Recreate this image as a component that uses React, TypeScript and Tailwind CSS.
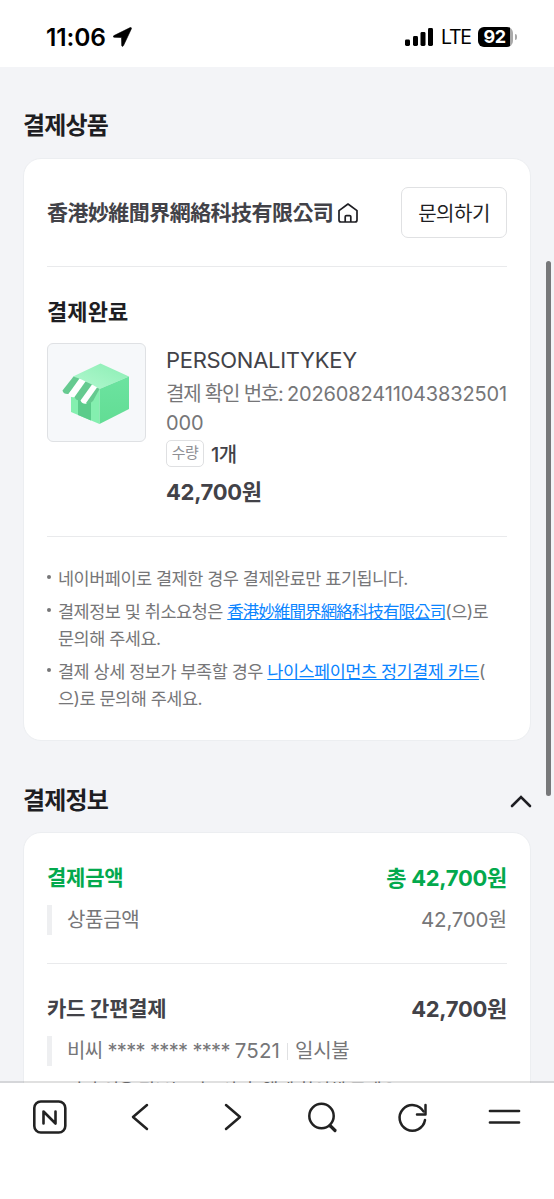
import type { ReactNode } from 'react';

const company = '香港妙維聞界網絡科技有限公司';

function StatusBar() {
  return (
    <header className="flex h-[67px] shrink-0 items-center justify-between bg-white pt-[7px] pr-[37px] pl-[46px] text-black">
      <div className="flex items-center gap-[7px]">
        <span className="w-[60px] pt-px text-[24.5px] font-semibold tracking-[-0.1px]">11:06</span>
        <svg width="19" height="20" viewBox="0 0 19 20">
          <path d="M17.2 .6 1 8.6c-1.2.6-.9 1.7.2 1.7l7.3.2.2 7.7c0 1.4 1.3 1.6 1.8.4L18.3 1.9c.5-1-.2-1.7-1.1-1.3Z" fill="#000" stroke="#000" strokeWidth="0.6" />
        </svg>
      </div>
      <div className="flex items-center">
        <svg width="29" height="18" viewBox="0 0 29 18" fill="#000">
          <rect x="0" y="11.5" width="5" height="6.5" rx="1.4" />
          <rect x="8" y="8" width="5" height="10" rx="1.4" />
          <rect x="15.5" y="4" width="5" height="14" rx="1.4" />
          <rect x="23" y="0" width="5" height="18" rx="1.4" />
        </svg>
        <span className="ml-[7px] w-[29px] pt-px text-[19.5px] tracking-[-1.2px]">LTE</span>
        <div className="ml-[8px] flex h-[20px] w-[35px] items-center justify-center overflow-hidden rounded-[6px] bg-linear-to-r from-black from-92% to-[#aaa] to-92% pr-[2px] text-[18px] leading-[20px] font-bold tracking-[-0.5px] text-white">
          92
        </div>
        <span className="ml-[2px] h-[6px] w-[2px] rounded-r-full bg-[#aaa]" />
      </div>
    </header>
  );
}

function HomeIcon() {
  return (
    <svg width="20" height="20" viewBox="0 0 20 20" fill="none" stroke="#1e1e23" strokeWidth="1.7" strokeLinejoin="round">
      <path d="M1 7.6 10 1l9 6.6V17a2 2 0 0 1-2 2H3a2 2 0 0 1-2-2Z" />
      <path d="M7.2 19v-5.2a1.2 1.2 0 0 1 1.2-1.2h3.2a1.2 1.2 0 0 1 1.2 1.2V19" />
    </svg>
  );
}

function StoreBox() {
  return (
    <svg className="shrink-0" width="99" height="99" viewBox="0 0 99 99">
      <defs>
        <linearGradient id="top" x1="0" y1="1" x2="1" y2="0">
          <stop offset="0" stopColor="#b2f8cf" />
          <stop offset="1" stopColor="#8beeb4" />
        </linearGradient>
        <linearGradient id="side" x1="0" y1="0" x2="0" y2="1">
          <stop offset="0" stopColor="#6ce3a0" />
          <stop offset="1" stopColor="#62dd94" />
        </linearGradient>
      </defs>
      <path d="M53.5 20.5 82 33.5 52.5 46 26 33.5Z" fill="url(#top)" />
      <path d="M24 44 40 40 52.5 46V81L24 69Z" fill="#84efaf" />
      <path d="M52.5 46 82 33.5V66L52.5 81Z" fill="url(#side)" />
      <path d="M31 48v24L44 77.5V52Z" fill="#5bcc8b" />
      <path d="M26.5 33.5 15.5 47.5q1 4 6 3.5L33.500 36Z" fill="#66ca90" />
      <path d="M32.5 35.5 21.5 51q1.5 4 6.5 3L39.500 39Z" fill="#fff" />
      <path d="M38.5 38.5 27.500 54q1.500 4 6.500 3.500L46 42Z" fill="#66ca90" />
      <path d="M45 41.5 33.500 57.500q2 4 6 3L51 45Z" fill="#fff" />
      <path d="M50 44.5 39 60q4 1.500 7-2L52.500 46Z" fill="#66ca90" />
    </svg>
  );
}

function Note({ children }: { children: ReactNode }) {
  return (
    <li className="flex gap-[7px]">
      <span className="mt-[10px] size-[4px] shrink-0 rounded-full bg-[#767678]" />
      <div className="whitespace-nowrap">{children}</div>
    </li>
  );
}

function AmountRow({ label, amount, className }: { label: string; amount: string; className: string }) {
  return (
    <div className={`flex h-[30px] items-center justify-between font-bold ${className}`}>
      <span className="text-[21px] tracking-[-0.2px]">{label}</span>
      <span className="text-[22px] tracking-[-0.3px]">{amount}</span>
    </div>
  );
}

function BottomBar() {
  return (
    <nav className="relative mt-[-2px] h-[118px] shrink-0 border-t-2 border-black/12 bg-white bg-clip-padding pt-[17px]">
      <div className="flex items-center justify-between px-[32px]">
        <svg width="36" height="36" viewBox="0 0 36 36" fill="none" stroke="#222" strokeWidth="2.6" strokeLinejoin="round" strokeLinecap="round">
          <rect x="2.3" y="1.5" width="31" height="31" rx="6.5" />
          <path d="M11.5 23.5v-12l12 12v-12" />
        </svg>
        <svg width="36" height="36" viewBox="0 0 36 36" fill="none" stroke="#222" strokeWidth="2.5" strokeLinejoin="round" strokeLinecap="round">
          <path d="M24 5 10 17l14 12" />
        </svg>
        <svg width="36" height="36" viewBox="0 0 36 36" fill="none" stroke="#222" strokeWidth="2.5" strokeLinejoin="round" strokeLinecap="round">
          <path d="m12 5 14 12-14 12" />
        </svg>
        <svg width="36" height="36" viewBox="0 0 36 36" fill="none" stroke="#222" strokeWidth="2.5" strokeLinecap="round">
          <circle cx="17.5" cy="16" r="12.2" />
          <path d="m26.5 26 4.5 4.5" strokeWidth="3.2" />
        </svg>
        <svg width="36" height="36" viewBox="0 0 36 36" fill="none" stroke="#222" strokeWidth="2.5" strokeLinecap="round" strokeLinejoin="round">
          <path d="M30 20A12.8 12.8 0 1 1 28.5 11.5" />
          <path d="M30.5 5v9.500h-8.500" />
        </svg>
        <svg width="36" height="36" viewBox="0 0 36 36" stroke="#222" strokeWidth="2.7" strokeLinecap="round">
          <path d="M4 11h29M4 22.500h29" />
        </svg>
      </div>
    </nav>
  );
}

export default function App() {
  return (
    <div className="relative flex h-[1199px] w-[554px] flex-col overflow-hidden bg-[#f3f4f7] font-[Inter,'Noto_Sans_CJK_KR',sans-serif]">
      <StatusBar />
      <main className="min-h-0 flex-1 overflow-hidden px-[23px] pt-[41px]">
        <h2 className="h-[50px] text-[24px] leading-[36px] font-bold tracking-[-0.8px] text-[#1e1e23]">결제상품</h2>

        <section className="h-[583px] rounded-[18px] border border-[#eceef1] bg-white px-[23px] pt-[28px]">
          <div className="flex h-[51px] items-center justify-between">
            <div className="flex items-center gap-[5px]">
              <span className="text-[21px] font-bold tracking-[-0.55px] text-[#424248]">{company}</span>
              <HomeIcon />
            </div>
            <button className="h-[51px] w-[106px] rounded-[7px] border-[1.5px] border-[#e0e1e3] pt-[2px] text-[20px] tracking-[-0.5px] text-[#1e1e23]">
              문의하기
            </button>
          </div>

          <div className="mt-[28px] border-t border-[#e9eaec] pt-[29px]">
            <h3 className="h-[47px] text-[22px] leading-[33px] font-bold tracking-[0.1px] text-[#1e1e23]">결제완료</h3>
            <div className="flex gap-[20px] whitespace-nowrap">
              <div className="flex size-[99px] shrink-0 items-center justify-center rounded-[6px] border-[1.5px] border-[#dfe1e4] bg-[#f6f8fa]">
                <StoreBox />
              </div>
              <div>
                <p className="h-[37px] text-[22px] leading-[34px] tracking-[-0.3px] text-[#424248]">PERSONALITYKEY</p>
                <p className="text-[20px] leading-[29px] tracking-[-0.15px] text-[#767678]">
                  <span className="tracking-[-1.2px]">결제 확인 번호: </span>2026082411043832501
                  <br />
                  000
                </p>
                <div className="mt-[1px] flex h-[28px] items-center gap-[7px]">
                  <span className="flex h-[27px] w-[38px] items-center justify-center rounded-[5px] border-[1.5px] border-[#dfe0e2] text-[15px] tracking-[-0.5px] text-[#8f8f94]">
                    수량
                  </span>
                  <span className="pt-[3px] text-[20px] font-medium tracking-[-0.6px] text-[#424248]">1개</span>
                </div>
                <p className="mt-[9px] text-[22px] leading-[33px] font-bold tracking-[-0.3px] text-[#424248]">42,700원</p>
              </div>
            </div>
          </div>

          <ul className="mt-[27px] flex flex-col gap-[6px] border-t border-[#e9eaec] pt-[28px] text-[17.5px] leading-[27px] tracking-[-0.5px] text-[#767678]">
            <Note>네이버페이로 결제한 경우 결제완료만 표기됩니다.</Note>
            <Note>
              결제정보 및 취소요청은{' '}
              <a className="text-[16.5px] leading-none tracking-[-0.93px] text-[#0a84ff] underline">{company}</a>(으)로
              <br />
              문의해 주세요.
            </Note>
            <Note>
              결제 상세 정보가 부족할 경우 <a className="text-[#0a84ff] underline">나이스페이먼츠 정기결제 카드</a>(
              <br />
              으)로 문의해 주세요.
            </Note>
          </ul>
        </section>

        <div className="mt-[42px] flex h-[49px] items-start justify-between">
          <h2 className="text-[24px] leading-[36px] font-bold tracking-[-0.8px] text-[#1e1e23]">결제정보</h2>
          <svg className="mt-[11px] mr-[-1px]" width="22" height="14" viewBox="0 0 22 14" fill="none" stroke="#1e1e23" strokeWidth="2.6" strokeLinecap="round">
            <path d="M2 12 11 3l9 9" />
          </svg>
        </div>

        <section className="h-[400px] rounded-[18px] border border-[#eceef1] bg-white px-[23px] pt-[30px] whitespace-nowrap">
          <AmountRow label="결제금액" amount="총 42,700원" className="text-[#03a94d]" />
          <div className="mt-[12px] flex h-[30px] items-center border-l-[5px] border-[#eeeff1] pl-[15px] text-[20px] text-[#767678]">
            <span className="tracking-[-0.3px]">상품금액</span>
            <span className="ml-auto text-[20.5px] tracking-[-0.2px]">42,700원</span>
          </div>
          <div className="mt-[28px] border-t border-[#e9eaec] pt-[30px]">
            <AmountRow label="카드 간편결제" amount="42,700원" className="text-[#424248]" />
            <div className="mt-[12px] flex h-[30px] items-center border-l-[5px] border-[#eeeff1] pl-[15px] text-[20px] text-[#767678]">
              <span className="tracking-[-0.65px]">
                비씨 **** **** **** <span className="text-[20.5px] tracking-[0.1px]">7521</span>
              </span>
              <span className="mx-[7px] h-[17px] w-px bg-[#e0e1e3]" />
              <span className="tracking-[-0.2px]">일시불</span>
            </div>
            <p className="mt-[10px] ml-[20px] text-[17.5px] leading-[27px] tracking-[-0.4px] text-[#767678]">
              카카 이용 정보는 카드사 홈 앱에 확인해 주세요
            </p>
          </div>
        </section>
      </main>
      <BottomBar />
      <div className="absolute top-[261px] right-[3px] h-[535px] w-[5px] rounded-full bg-[#77787a]" />
    </div>
  );
}
